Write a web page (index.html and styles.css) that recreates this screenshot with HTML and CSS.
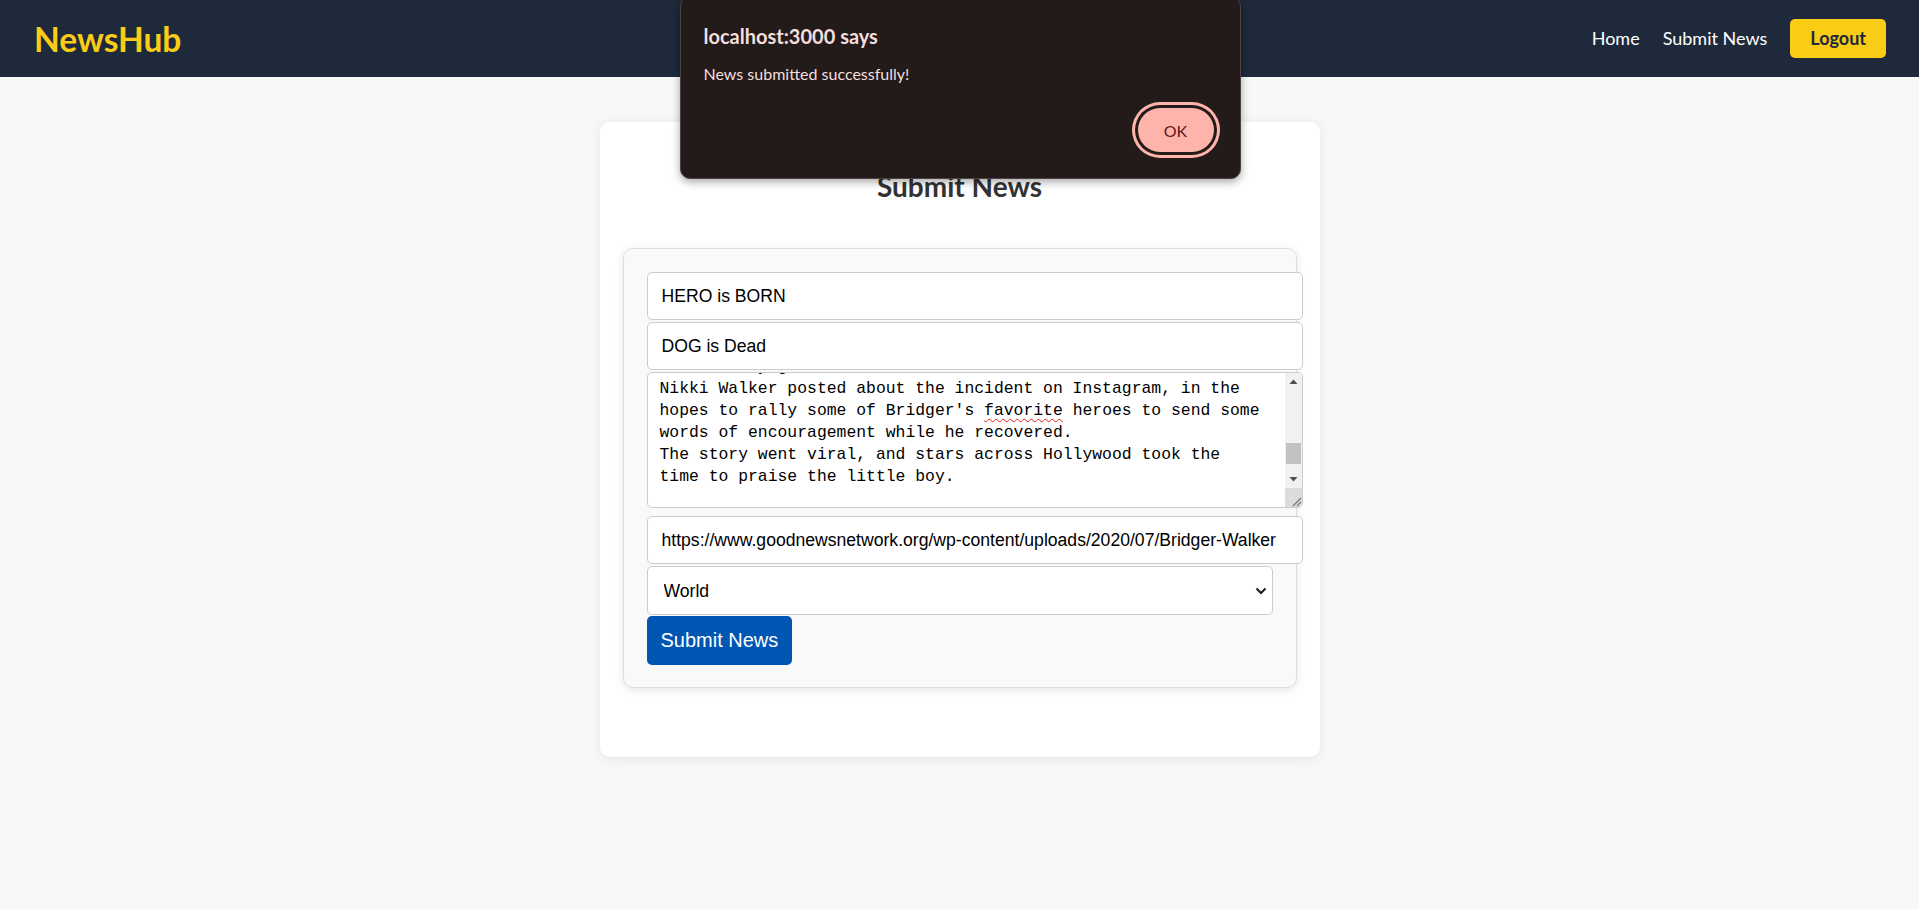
FILE: index.html
```html
<!DOCTYPE html>
<html lang="en">
<head>
<meta charset="utf-8">
<title>NewsHub</title>
<link rel="stylesheet" href="styles.css">
</head>
<body>
<header class="topbar">
  <div class="logo">NewsHub</div>
  <nav class="nav">
    <a class="nav-link" href="#">Home</a>
    <a class="nav-link" href="#">Submit News</a>
    <button class="logout" type="button">Logout</button>
  </nav>
</header>

<main class="page">
  <section class="card">
    <h2 class="card-title">Submit News</h2>
    <form class="news-form">
      <input class="field" type="text" value="HERO is BORN">
      <input class="field" type="text" value="DOG is Dead">
      <div class="textarea" role="textbox" aria-multiline="true">
        <div class="ta-body">
<div class="ta-text">Doctors say good rest will heal him.
Nikki Walker posted about the incident on Instagram, in the
hopes to rally some of Bridger's <span class="misspelled">favorite</span> heroes to send some
words of encouragement while he recovered.
The story went viral, and stars across Hollywood took the
time to praise the little boy.</div>
        </div>
        <div class="ta-scroll">
          <div class="sb-btn">
            <svg width="17" height="17" viewBox="0 0 17 17"><polygon points="4.5,11 12.5,11 8.5,6.5" fill="#505050"/></svg>
          </div>
          <div class="sb-track"><div class="sb-thumb"></div></div>
          <div class="sb-btn">
            <svg width="17" height="17" viewBox="0 0 17 17"><polygon points="4.5,6 12.5,6 8.5,10.5" fill="#505050"/></svg>
          </div>
          <div class="sb-corner">
            <svg width="17" height="19" viewBox="0 0 17 19"><line x1="16" y1="10" x2="8" y2="18" stroke="#7a7a7a" stroke-width="1.2"/><line x1="16" y1="14" x2="12" y2="18" stroke="#7a7a7a" stroke-width="1.2"/></svg>
          </div>
        </div>
      </div>
      <input class="field field-url" type="text" value="https://www.goodnewsnetwork.org/wp-content/uploads/2020/07/Bridger-Walker">
      <div class="select-wrap">
        <select class="select">
          <option>World</option>
          <option>Sports</option>
          <option>Tech</option>
        </select>
        <svg class="chevron" width="12" height="8" viewBox="0 0 12 8"><polyline points="1.5,1.5 6,6 10.5,1.5" fill="none" stroke="#1a1a1a" stroke-width="2"/></svg>
      </div>
      <button class="submit" type="button">Submit News</button>
    </form>
  </section>
</main>

<div class="alert" role="alertdialog">
  <div class="alert-title">localhost:3000 says</div>
  <div class="alert-msg">News submitted successfully!</div>
  <div class="alert-actions">
    <button class="alert-ok" type="button">OK</button>
  </div>
</div>
</body>
</html>
```

FILE: styles.css
```css
* { margin: 0; }

body {
  margin: 0;
  background: #f8f8f8;
  font-family: Lato, "Noto Sans", sans-serif;
  color: #333;
}

.topbar {
  height: 77px;
  background: #1e293b;
  display: flex;
  align-items: center;
  justify-content: space-between;
  padding: 0 33px 0 34px;
}

.logo {
  color: #facc15;
  font-weight: 700;
  font-size: 33.5px;
  line-height: 40px;
}

.nav {
  display: flex;
  align-items: center;
  gap: 23px;
}

.nav-link {
  color: #ffffff;
  text-decoration: none;
  font-size: 18px;
  line-height: 23px;
}

.logout {
  background: #facc15;
  color: #1e293b;
  border: none;
  border-radius: 5px;
  font-family: Lato, sans-serif;
  font-weight: 700;
  font-size: 18px;
  line-height: 23px;
  padding: 8px 20px;
}

.page {
  padding: 45px 0;
}

.card {
  width: 720px;
  box-sizing: border-box;
  margin: 0 auto;
  background: #ffffff;
  border-radius: 10px;
  padding: 23px;
  box-shadow: 0 2px 12px rgba(0, 0, 0, 0.08);
}

.card-title {
  text-align: center;
  font-size: 28px;
  line-height: 34px;
  font-weight: 700;
  color: #333;
  margin: 24px 0 45px;
}

.news-form {
  width: 626px;
  padding: 23px 23px 22px;
  border: 1px solid #dddddd;
  border-radius: 10px;
  background: #f9f9f9;
  box-shadow: 0 2px 8px rgba(0, 0, 0, 0.1);
  margin-bottom: 46px;
}

.field {
  display: block;
  width: 100%;
  box-sizing: content-box;
  padding: 14px;
  height: 18px;
  line-height: 18px;
  font-family: "Liberation Sans", Arial, sans-serif;
  font-size: 17.6px;
  color: #000;
  border: 1px solid #cccccc;
  border-radius: 5px;
  background: #fff;
  margin: 0 0 2px;
}

.textarea {
  display: flex;
  width: calc(100% + 30px);
  height: 136px;
  box-sizing: border-box;
  border: 1px solid #cccccc;
  border-radius: 5px;
  background: #fff;
  overflow: hidden;
  margin-bottom: 8px;
}

.ta-body {
  flex: 1;
  overflow: hidden;
  padding: 0 12px;
}

.ta-text {
  margin-top: -17px;
  white-space: pre;
  font-family: "Liberation Mono", "Courier New", monospace;
  font-size: 16.4px;
  line-height: 22px;
  color: #000;
}

.misspelled {
  text-decoration: underline wavy #e0201a;
  text-decoration-thickness: 1px;
  text-underline-offset: 3px;
}

.ta-scroll {
  width: 17px;
  display: flex;
  flex-direction: column;
  background: #f1f1f1;
}

.sb-btn {
  height: 17px;
  display: flex;
}

.sb-track {
  flex: 1;
}

.sb-thumb {
  margin: 53px 1px 0;
  height: 21px;
  background: #c1c1c1;
}

.sb-corner {
  height: 19px;
  background: #dcdcdc;
  display: flex;
}

.field-url {
  margin-bottom: 2px;
}

.select-wrap {
  position: relative;
  margin-bottom: 1px;
}

.select {
  display: block;
  width: 100%;
  height: 49px;
  box-sizing: border-box;
  -webkit-appearance: none;
  appearance: none;
  border: 1px solid #cccccc;
  border-radius: 5px;
  background: #fff;
  padding: 0 16px;
  font-family: "Liberation Sans", Arial, sans-serif;
  font-size: 17.6px;
  color: #000;
}

.chevron {
  position: absolute;
  right: 6px;
  top: 21px;
}

.submit {
  display: block;
  border: none;
  border-radius: 5px;
  background: #0056b3;
  color: #ffffff;
  font-family: "Liberation Sans", Arial, sans-serif;
  font-size: 20px;
  line-height: 23px;
  padding: 13px 14px;
}

.alert {
  position: absolute;
  top: -4px;
  left: 50%;
  width: 561px;
  margin-left: -280px;
  box-sizing: border-box;
  padding: 27px 26px 26px 23px;
  background: #231a1a;
  border: 1px solid #4d4242;
  border-radius: 10px;
  box-shadow: 0 3px 8px rgba(0, 0, 0, 0.35);
  color: #f2dfdd;
}

.alert-title {
  font-weight: 700;
  font-size: 20px;
  line-height: 24px;
}

.alert-msg {
  margin-top: 16px;
  font-size: 16px;
  line-height: 20px;
}

.alert-actions {
  display: flex;
  justify-content: flex-end;
  margin-top: 24px;
}

.alert-ok {
  width: 76px;
  height: 44px;
  border: none;
  border-radius: 22px;
  background: #ffb4ab;
  color: #5e1512;
  font-family: Lato, sans-serif;
  font-size: 16px;
  box-shadow: 0 0 0 3px #231a1a, 0 0 0 6px #ffb4ab;
}
```
